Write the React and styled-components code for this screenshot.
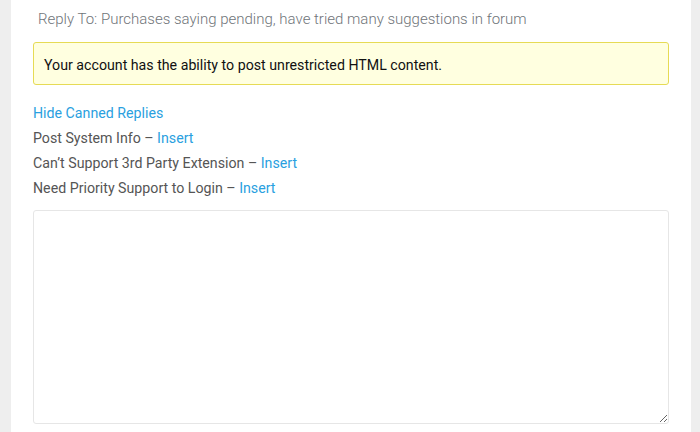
import React from "react";
import styled, { createGlobalStyle } from "styled-components";

const Global = createGlobalStyle`
  html, body { margin: 0; padding: 0; background: #eeeeee; }
  body { font-family: Roboto, "Liberation Sans", sans-serif; overflow: hidden; }
`;

const Panel = styled.div`
  margin: 0 9px 0 11px;
  background: #ffffff;
  padding: 7px 22px 0 22px;
  height: 432px;
  box-sizing: border-box;
`;

const Heading = styled.h2`
  margin: 0 0 11px 5px;
  font-size: 15px;
  font-weight: 300;
  line-height: 24px;
  color: #6f7479;
`;

const Notice = styled.div`
  background: #ffffe0;
  border: 1px solid #e6db55;
  border-radius: 3px;
  padding: 12px 10px 8px;
  font-size: 14.2px;
  line-height: 21px;
  color: #111111;
  margin-bottom: 16px;
`;

const List = styled.div`
  display: flex;
  flex-direction: column;
  margin-bottom: 9px;
`;

const Line = styled.div`
  font-size: 14.2px;
  line-height: 25px;
  color: #555555;
`;

const Link = styled.a`
  color: #2a9fe0;
  text-decoration: none;
  cursor: pointer;
`;

const TextArea = styled.textarea`
  display: block;
  width: 100%;
  height: 214px;
  box-sizing: border-box;
  border: 1px solid #e6e6e6;
  border-radius: 3px;
  background: #fff;
  resize: vertical;
  outline: none;
  font-family: inherit;
`;

const replies = [
  "Post System Info",
  "Can’t Support 3rd Party Extension",
  "Need Priority Support to Login",
];

export default function App() {
  return (
    <>
      <Global />
      <Panel>
        <Heading>Reply To: Purchases saying pending, have tried many suggestions in forum</Heading>
        <Notice>Your account has the ability to post unrestricted HTML content.</Notice>
        <List>
          <Line>
            <Link>Hide Canned Replies</Link>
          </Line>
          {replies.map((r) => (
            <Line key={r}>
              {r} – <Link>Insert</Link>
            </Line>
          ))}
        </List>
        <TextArea />
      </Panel>
    </>
  );
}
